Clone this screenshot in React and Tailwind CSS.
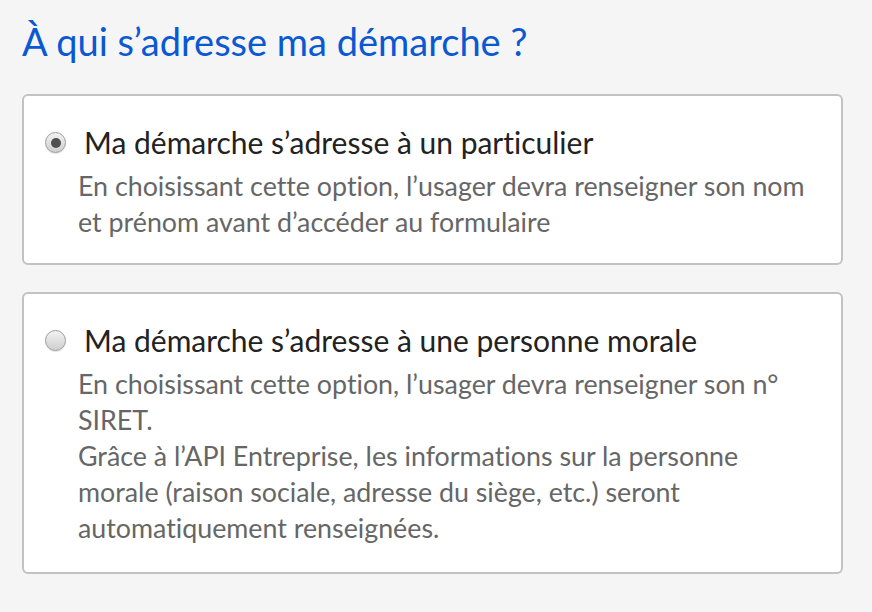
import React from 'react'

const options = [
    {
        checked: true,
        label: "Ma démarche s’adresse à un particulier",
        lines: ["En choisissant cette option, l’usager devra renseigner son nom et prénom avant d’accéder au formulaire"],
    },
    {
        checked: false,
        label: "Ma démarche s’adresse à une personne morale",
        lines: [
            "En choisissant cette option, l’usager devra renseigner son n° SIRET.",
            "Grâce à l’API Entreprise, les informations sur la personne morale (raison sociale, adresse du siège, etc.) seront automatiquement renseignées.",
        ],
    },
]

const Radio = ({ checked }) => (
    <span className="mt-[10px] flex h-[21px] w-[21px] shrink-0 items-center justify-center rounded-full border border-[#9c9c9c] bg-gradient-to-b from-[#f2f2f2] to-[#cfcfcf] shadow-[0_1px_1px_rgba(0,0,0,0.12)]">
        {checked && <span className="h-[10px] w-[10px] rounded-full bg-[#505050]" />}
    </span>
)

const App = () => {
    return (
        <div className="min-h-[612px] w-full bg-[#f5f5f5] px-[22px] pt-[17px] font-['Lato','Noto_Sans',sans-serif] [font-variant-ligatures:none]">
            <h2 className="text-[38px] leading-[48px] text-[#0a58d2]">À qui s’adresse ma démarche ?</h2>
            <div className="mt-[29px] flex flex-col gap-[27px]">
                {options.map((opt, index) => (
                    <label key={index} className="flex w-[821px] gap-[12px] rounded-[6px] border-2 border-[#c2c2c2] bg-white pb-[23px] pl-[21px] pr-[20px] pt-[26px] last:pb-[26px]">
                        <Radio checked={opt.checked} />
                        <div className="flex flex-col">
                            <span className="mb-[6px] ml-[6px] text-[30px] leading-[40px] text-[#222]">{opt.label}</span>
                            {opt.lines.map((line, i) => (
                                <p key={i} className="text-[26.8px] leading-[36px] text-[#666]">{line}</p>
                            ))}
                        </div>
                    </label>
                ))}
            </div>
        </div>
    )
}

export default App
